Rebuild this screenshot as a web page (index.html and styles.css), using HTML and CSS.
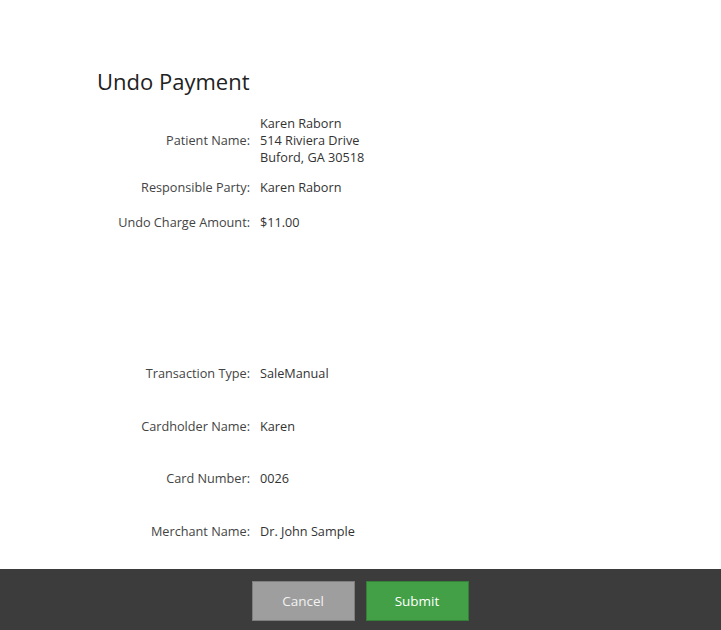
FILE: index.html
```html
<!DOCTYPE html>
<html lang="en">
<head>
    <meta charset="UTF-8">
    <meta name="viewport" content="width=device-width, initial-scale=1.0">
    <title>Undo Payment</title>
    <link rel="stylesheet" href="styles.css">
</head>
<body>
    <div class="page">
        <main class="content">
            <h1 class="title">Undo Payment</h1>

            <div class="details details-top">
                <div class="label">Patient Name:</div>
                <div class="value">
                    Karen Raborn<br>
                    514 Riviera Drive<br>
                    Buford, GA 30518
                </div>

                <div class="label">Responsible Party:</div>
                <div class="value">Karen Raborn</div>

                <div class="label row-amount">Undo Charge Amount:</div>
                <div class="value row-amount">$11.00</div>
            </div>

            <div class="details details-card">
                <div class="label">Transaction Type:</div>
                <div class="value">SaleManual</div>

                <div class="label">Cardholder Name:</div>
                <div class="value">Karen</div>

                <div class="label">Card Number:</div>
                <div class="value">0026</div>

                <div class="label">Merchant Name:</div>
                <div class="value">Dr. John Sample</div>
            </div>
        </main>

        <footer class="actions">
            <button type="button" class="btn btn-cancel">Cancel</button>
            <button type="submit" class="btn btn-submit">Submit</button>
        </footer>
    </div>
</body>
</html>
```

FILE: styles.css
```css
* {
    margin: 0;
    padding: 0;
    box-sizing: border-box;
}

body {
    font-family: 'Open Sans', 'Noto Sans', sans-serif;
    background: #fff;
    color: #333;
    font-size: 12.7px;
}

.page {
    height: 630px;
    display: flex;
    flex-direction: column;
}

.content {
    flex: 1;
    padding: 66px 0 0 97px;
}

.title {
    font-size: 22px;
    font-weight: normal;
    color: #222;
    line-height: 30px;
    margin-bottom: 19px;
}

.details {
    display: grid;
    grid-template-columns: 153px auto;
    column-gap: 10px;
    align-items: center;
    line-height: 17px;
}

.label {
    text-align: right;
    color: #444;
}

.value {
    color: #333;
}

.details-top {
    row-gap: 13px;
}

.details-top .row-amount {
    margin-top: 5px;
}

.details-card {
    margin-top: 134px;
    row-gap: 35.5px;
}

.actions {
    height: 61px;
    background: #3c3c3c;
    display: flex;
    justify-content: center;
    align-items: center;
    gap: 11px;
    padding: 3px 1px 0 0;
}

.btn {
    width: 103px;
    height: 40px;
    border: 1px solid rgba(0, 0, 0, 0.2);
    color: #fff;
    font-family: inherit;
    font-size: 13.5px;
    cursor: pointer;
}

.btn-cancel {
    background: #9e9e9e;
    color: #f2f2f2;
}

.btn-submit {
    background: #43a047;
}
```
